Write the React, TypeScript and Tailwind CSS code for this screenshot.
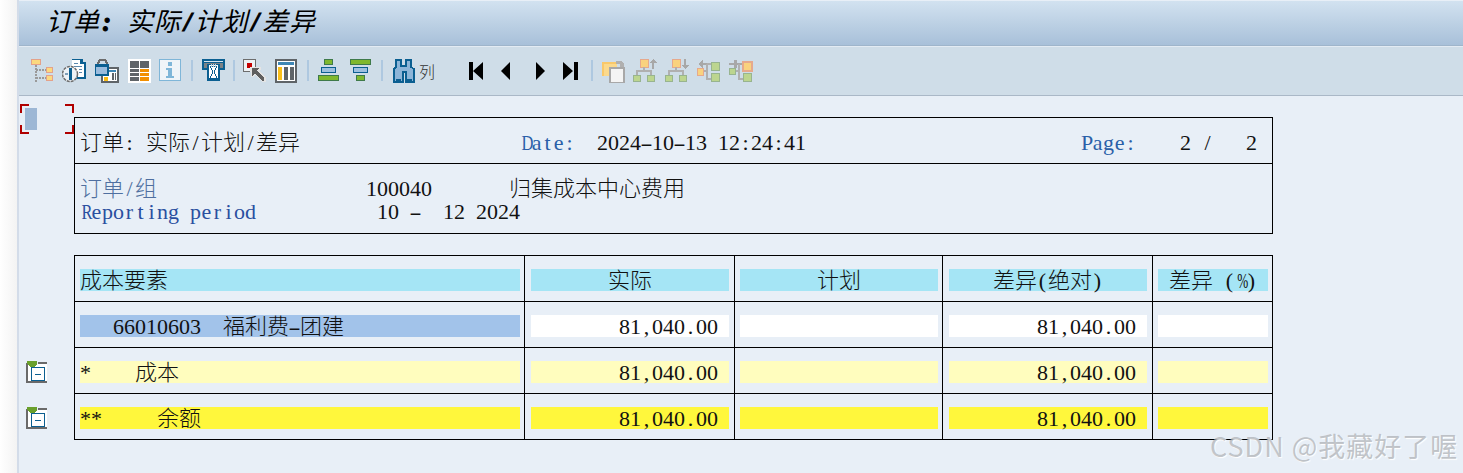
import React from "react";

const BLUE = "#0b5f91";
const GRAY = "#5f6468";

// glyphs that are wider or narrower than the fixed 11px report cell
function fit(ch: string) {
  if (ch === "-") return "scale-x-[1.7]";
  if (ch === "%") return "scale-x-[0.6]";
  if (ch === "R" || ch === "D") return "scale-x-[0.75]";
  return "";
}

// report text: latin cells are 11px wide, CJK cells 22px
function Cells({ text }: { text: string }) {
  return (
    <>
      {text.split(/([\u4e00-\u9fff]+)/).map((part, i) =>
        i % 2 === 1 ? (
          <span key={i} className="font-['Noto_Sans_CJK_SC',sans-serif] text-[22px] font-light leading-[0]">
            {part}
          </span>
        ) : (
          <React.Fragment key={i}>
            {Array.from(part).map((ch, j) => (
              <span key={j} className={`inline-block w-[11px] text-center ${fit(ch)}`}>
                {ch}
              </span>
            ))}
          </React.Fragment>
        ),
      )}
    </>
  );
}

function TitleText({ children }: { children: string }) {
  return <span className="font-['Noto_Sans_CJK_SC',sans-serif] text-[26px] font-normal tracking-[1px]">{children}</span>;
}

function TitleMark({ children }: { children: string }) {
  return <span className="inline-block w-[13.5px] text-center [-webkit-text-stroke:1px_#000]">{children}</span>;
}

function Icon({ children, className = "" }: { children: React.ReactNode; className?: string }) {
  return (
    <svg viewBox="0 0 24 24" shapeRendering="crispEdges" className={`h-6 w-6 shrink-0 ${className}`}>
      {children}
    </svg>
  );
}

function Sep({ className = "" }: { className?: string }) {
  return <div className={`h-[21px] w-[2px] shrink-0 bg-[#aec8e0] ${className}`} />;
}

const TreeIcon = () => (
  <Icon>
    <path d="M6 6v18" stroke="#9a9a9a" strokeWidth="2" strokeDasharray="2 1" />
    <path d="M6 11h10M6 19h10" stroke="#9a9a9a" strokeWidth="2" strokeDasharray="2 1" />
    <rect x="1.5" y="0.5" width="9" height="5" fill="#fbd97f" stroke="#e3a28a" />
    <rect x="16.5" y="8.5" width="6" height="5" fill="#fbd97f" stroke="#e3a28a" />
    <rect x="16.5" y="16.5" width="6" height="5" fill="#fbd97f" stroke="#e3a28a" />
  </Icon>
);

const CopyIcon = () => (
  <Icon>
    <rect x="10" y="0" width="11" height="6" fill={BLUE} />
    <rect x="14" y="3" width="10" height="17" fill={BLUE} />
    <rect x="16" y="5" width="6" height="13" fill="#fff" />
    <rect x="10" y="1" width="8" height="14" fill="#fff" />
    <path d="M12 4h4M12 7h8M17 10h3M17 13h3" stroke="#5b88ad" />
    <circle cx="8" cy="15" r="7.5" fill="#eef2f6" stroke="#6d6d6d" strokeWidth="1.5" strokeDasharray="3 1" shapeRendering="auto" />
    <rect x="7" y="9" width="3" height="12" fill={BLUE} />
    <rect x="3" y="14" width="3" height="2" fill="#7f9fb8" />
  </Icon>
);

const LockIcon = () => (
  <Icon>
    <path d="M3 7V4l2-3h5l2 3v3" fill="none" stroke="#6c6c6c" strokeWidth="2" />
    <rect x="6" y="8" width="18" height="16" fill={GRAY} />
    <rect x="8" y="10" width="14" height="12" fill="#fff" />
    <rect x="14" y="11" width="7" height="2" fill="#3f87b5" />
    <rect x="17" y="14" width="2" height="7" fill={GRAY} />
    <rect x="20" y="14" width="1" height="7" fill={GRAY} />
    <rect x="9" y="18" width="4" height="4" fill="#f9bb16" />
    <rect x="0" y="6" width="13" height="10" fill="#9bbcdd" stroke={BLUE} strokeWidth="1.5" />
    <rect x="0" y="6" width="13" height="2" fill={BLUE} />
  </Icon>
);

const TableIcon = () => (
  <Icon>
    <rect x="1" y="0" width="23" height="24" fill="#fff" />
    <rect x="3" y="2" width="9" height="7" fill={GRAY} />
    <rect x="13" y="2" width="9" height="7" fill={GRAY} />
    <rect x="3" y="10" width="9" height="3" fill={GRAY} />
    <rect x="3" y="14" width="9" height="3" fill={GRAY} />
    <rect x="3" y="18" width="9" height="4" fill={GRAY} />
    <rect x="13" y="10" width="9" height="3" fill="#f28f00" />
    <rect x="13" y="14" width="9" height="3" fill="#f28f00" />
    <rect x="13" y="18" width="9" height="4" fill="#f28f00" />
  </Icon>
);

const InfoIcon = () => (
  <Icon>
    <rect x="0.5" y="0.5" width="21" height="21" fill="#eff4f8" stroke="#7fb6d8" />
    <rect x="9" y="3" width="4" height="4" fill="#7fb6d8" />
    <path d="M7 9h6v8h2v2H7v-2h2v-6H7z" fill="#7fb6d8" />
  </Icon>
);

const PrintIcon = () => (
  <Icon>
    <rect x="0" y="0" width="23" height="11" fill={BLUE} />
    <rect x="2" y="2" width="19" height="1" fill="#d8e4ee" />
    <rect x="2" y="4" width="19" height="5" fill="#7b8287" />
    <rect x="5" y="5" width="13" height="17" fill={BLUE} />
    <rect x="7" y="6" width="9" height="14" fill="#fff" />
    <path d="M8 7h7l-3 6 3 6H8l3-6z" fill="none" stroke={BLUE} />
    <path d="M9 5v3M11 5v3M13 5v3" stroke="#c8d4dc" />
  </Icon>
);

const PickIcon = () => (
  <Icon>
    <rect x="0.5" y="0.5" width="12" height="12" fill="#eef2f5" stroke="#6d6d6d" />
    <rect x="4" y="4" width="5" height="5" fill="#c40000" />
    <path d="M7 8h11v2l-2 2 7 7v4h-4l-7-7-2 2H8z" fill="#e4e4e4" />
    <path d="M9 9h7l-2 3 7 7v3h-2l-7-7-3 2z" fill="#5f5f5f" />
  </Icon>
);

const ColumnsIcon = () => (
  <Icon>
    <rect x="0" y="0" width="22" height="24" fill={GRAY} />
    <rect x="2" y="2" width="18" height="20" fill="#fff" />
    <rect x="3" y="3" width="16" height="3" fill="#3f87b5" />
    <rect x="3" y="8" width="4" height="13" fill="#f9bf1a" />
    <rect x="9" y="8" width="4" height="13" fill={GRAY} />
    <rect x="15" y="8" width="4" height="13" fill={GRAY} />
  </Icon>
);

function Stack({ bars }: { bars: [number, number][] }) {
  return (
    <Icon>
      {bars.map(([x, w], i) => (
        <rect
          key={i}
          x={x + 0.5}
          y={i * 8 + 0.5}
          width={w - 1}
          height="5"
          fill={i === 1 ? "#9dc0e0" : "#7fb82e"}
          stroke={i === 1 ? BLUE : "#3f7a4a"}
        />
      ))}
    </Icon>
  );
}

const Binoculars = () => (
  <Icon>
    <path d="M4 1h5v6h5V1h5v7l3 2v13h-8V13H11v10H2V10l2-2z" fill="#8db5d8" stroke={BLUE} strokeWidth="1.5" />
    <rect x="4" y="20" width="5" height="3" fill={BLUE} />
    <rect x="15" y="20" width="5" height="3" fill={BLUE} />
  </Icon>
);

function Nav({ d }: { d: string }) {
  return (
    <svg viewBox="0 0 24 24" className="h-6 w-6 shrink-0">
      <path d={d} fill="#000" />
    </svg>
  );
}

const MoveIcon = () => (
  <Icon>
    <rect x="0" y="3" width="14" height="14" fill="#f9c86a" />
    <rect x="2" y="5" width="13" height="12" fill="#fbd98c" />
    <path d="M14 2h5l3 3v3h-2l1 2-2 2-3-4h2V5h-4z" fill="#b0b0b0" />
    <rect x="8" y="9" width="14" height="15" fill="#f4f4f4" stroke="#a8a8a8" strokeWidth="2" />
  </Icon>
);

function Org({ arrow }: { arrow: "up" | "down" }) {
  return (
    <Icon>
      <rect x="7" y="0" width="8" height="8" fill="#f9d27f" stroke="#e6a98c" />
      <path d="M11 8v4M4 16v-4h14v4" fill="none" stroke="#b0b0b0" strokeWidth="1.5" />
      <rect x="0.5" y="16.5" width="7" height="6" fill="#bcd58f" stroke="#98b48f" />
      <rect x="14.5" y="16.5" width="7" height="6" fill="#bcd58f" stroke="#98b48f" />
      {arrow === "up" ? (
        <path d="M21 10V4h3l-4-4-4 4h3v6z" fill="#a8a8a8" />
      ) : (
        <path d="M19 0v6h-3l4 4 4-4h-3V0z" fill="#a8a8a8" />
      )}
    </Icon>
  );
}

function OrgSide({ flip }: { flip?: boolean }) {
  return (
    <Icon>
      {flip ? (
        <>
          <path d="M0 4h5V1h3v3h5v2H8v3H5V6H0z" fill="#a8a8a8" />
          <rect x="0.5" y="9.5" width="6" height="6" fill="#bcd58f" stroke="#98b48f" />
          <path d="M7 12h3M10 5v15h4" fill="none" stroke="#b0b0b0" strokeWidth="1.5" />
          <rect x="14" y="3" width="9" height="9" fill="#f9d27f" stroke="#e6a98c" strokeWidth="2" />
          <rect x="14.5" y="14.5" width="8" height="8" fill="#bcd58f" stroke="#98b48f" />
        </>
      ) : (
        <>
          <path d="M1 5l5-4v3h7v2H6v3z" fill="#a8a8a8" />
          <rect x="0.5" y="9.5" width="6" height="7" fill="#f9d27f" stroke="#e6a98c" />
          <path d="M7 12h3M10 5v15h4M10 5h4" fill="none" stroke="#b0b0b0" strokeWidth="1.5" />
          <rect x="14.5" y="3.5" width="8" height="8" fill="#bcd58f" stroke="#98b48f" />
          <rect x="14.5" y="14.5" width="8" height="8" fill="#bcd58f" stroke="#98b48f" />
        </>
      )}
    </Icon>
  );
}

const Collapse = () => (
  <svg viewBox="0 0 22 22" shapeRendering="crispEdges" className="h-[22px] w-[22px] shrink-0">
    <rect x="2" y="3" width="19" height="17" fill="#fff" />
    <rect x="0" y="2" width="2" height="20" fill="#6a6a6a" />
    <rect x="0" y="20" width="21" height="2" fill="#6a6a6a" />
    <rect x="12" y="1" width="9" height="2" fill="#6a6a6a" />
    <rect x="5.5" y="6.5" width="13" height="13" fill="#fff" stroke={BLUE} />
    <rect x="9" y="13" width="6" height="1" fill={BLUE} />
    <path d="M1 0h10v3L8 6H5L1 3z" fill="#6aa02c" />
  </svg>
);

const COLS = [
  "pl-[5px] pr-[4px]",
  "pl-[6px] pr-[5px]",
  "pl-[5px] pr-[4px]",
  "pl-[6px] pr-[5px]",
  "pl-[5px] pr-[4px]",
];

function Row({
  tint,
  firstTint,
  label,
  amount,
  header,
  icon,
}: {
  tint: string;
  firstTint?: string;
  label?: string;
  amount?: boolean;
  header?: string[];
  icon?: boolean;
}) {
  return (
    <div className="flex">
      <div className="flex w-[48px] shrink-0 items-start pt-[13px]">{icon && <Collapse />}</div>
      <div className="grid grid-cols-[450px_210px_208px_210px_120px] border-l border-black">
        {COLS.map((pad, i) => {
          const value = header ? header[i] : i === 0 ? label : amount && (i === 1 || i === 3) ? "81,040.00 " : "";
          const align = i === 0 ? "text-left" : header ? "text-center" : "text-right";
          const bg = i === 0 && firstTint ? firstTint : tint;
          return (
            <div key={i} className={`h-[46px] border-b border-r border-black pt-[13px] ${pad}`}>
              <div className={`h-[22px] whitespace-pre leading-[23px] ${bg} ${align}`}>
                <Cells text={value ?? ""} />
              </div>
            </div>
          );
        })}
      </div>
    </div>
  );
}

export default function App() {
  return (
    <div className="relative flex h-[473px] w-[1463px] overflow-hidden bg-white font-['Liberation_Serif','Noto_Sans_CJK_SC',serif] text-[22px] text-[#111]">
      <div className="w-[17px] shrink-0 bg-gradient-to-r from-[#ffffff] to-[#f3f3f3]" />
      <div className="w-[2px] shrink-0 bg-[#d3dce9]" />

      <main className="flex min-w-0 flex-1 flex-col bg-[#e8eff7]">
        <header className="mt-px flex h-[45px] shrink-0 items-center border-b border-[#9fb5cb] bg-gradient-to-b from-[#d2e2f0] to-[#a8c0d9] pb-[4px] pl-[27px] text-[27px] font-bold italic text-black">
          <h1 className="whitespace-pre leading-none">
            <TitleText>订单</TitleText>
            <TitleMark>:</TitleMark>
            <TitleMark> </TitleMark>
            <TitleText>实际</TitleText>
            <TitleMark>/</TitleMark>
            <TitleText>计划</TitleText>
            <TitleMark>/</TitleMark>
            <TitleText>差异</TitleText>
          </h1>
        </header>

        <nav className="flex h-[50px] shrink-0 items-center gap-2 border-t border-b border-t-[#e3ebf3] border-b-[#aab8c7] bg-[#cfdde8] pb-[1px] pl-[11px]">
          <TreeIcon />
          <CopyIcon />
          <div className="ml-px"><LockIcon /></div>
          <TableIcon />
          <InfoIcon />
          <Sep />
          <div className="ml-px"><PrintIcon /></div>
          <Sep className="-ml-px" />
          <PickIcon />
          <ColumnsIcon />
          <Sep />
          <div className="ml-px"><Stack bars={[[6, 9], [3, 15], [0, 21]]} /></div>
          <Stack bars={[[0, 21], [3, 15], [6, 9]]} />
          <Sep className="-ml-px" />
          <div className="ml-px"><Binoculars /></div>
          <span className="-ml-[5px] w-[16px] font-['Noto_Sans_CJK_SC',sans-serif] text-[16px] font-light text-[#333]">列</span>
          <div className="ml-[22px]"><Nav d="M4 3h4v18H4zM8 12L18 3v18z" /></div>
          <Nav d="M4 12l9-9v18z" />
          <Nav d="M7 3l9 9-9 9z" />
          <Nav d="M2 3l10 9-10 9zM13 3h4v18h-4z" />
          <Sep className="ml-[-2px]" />
          <div className="ml-px"><MoveIcon /></div>
          <div className="-ml-px"><Org arrow="up" /></div>
          <Org arrow="down" />
          <OrgSide />
          <OrgSide flip />
        </nav>

        <section className="pl-[7px]">
          <div className="flex">
            <div className="w-[48px] shrink-0 pt-[8px]">
              <div className="relative -ml-[6px] h-[30px] w-[54px]">
                <span className="absolute left-0 top-0 h-[9px] w-[9px] border-l-2 border-t-2 border-[#b00000]" />
                <span className="absolute right-0 top-0 h-[9px] w-[9px] border-r-2 border-t-2 border-[#b00000]" />
                <span className="absolute bottom-0 left-0 h-[9px] w-[9px] border-b-2 border-l-2 border-[#b00000]" />
                <span className="absolute bottom-0 right-0 h-[9px] w-[9px] border-b-2 border-r-2 border-[#b00000]" />
                <span className="absolute left-[5px] top-[4px] h-[22px] w-[12px] bg-[#9db7d5]" />
              </div>
            </div>
            <div className="mt-[21px] h-[117px] w-[1199px] border border-black">
              <div className="h-[46px] whitespace-pre border-b border-black pl-[5px] pt-[13px] leading-[23px]">
                <Cells text="订单: 实际/计划/差异                    " />
                <span className="text-[#2a5fa8]"><Cells text="Date:" /></span>
                <Cells text="  2024-10-13 12:24:41                         " />
                <span className="text-[#2a5fa8]"><Cells text="Page:" /></span>
                <Cells text="    2 /   2" />
              </div>
              <div className="whitespace-pre pl-[5px] pt-[13px] leading-[23px]">
                <div className="h-[23px]">
                  <span className="text-[#4f6fa0]"><Cells text="订单/组" /></span>
                  <Cells text="                   100040       归集成本中心费用" />
                </div>
                <div className="h-[23px]">
                  <span className="text-[#2a4fa0]"><Cells text="Reporting period" /></span>
                  <Cells text="           10 -  12 2024" />
                </div>
              </div>
            </div>
          </div>

          <div className="ml-[48px] mt-[21px] h-px w-[1199px] bg-black" />
          <Row tint="bg-[#a5e5f5]" header={["成本要素", "实际", "计划", "差异(绝对)", "差异 (%)"]} />
          <Row tint="bg-white" firstTint="bg-[#a2c3ea]" label="   66010603  福利费-团建" amount />
          <Row tint="bg-[#fffdbe]" label="*    成本" amount icon />
          <Row tint="bg-[#fff73c]" label="**     余额" amount icon />
        </section>
      </main>

      <div className="absolute left-[1210px] top-[429px] whitespace-pre font-['Noto_Sans_CJK_SC',sans-serif] text-[27px] leading-[34px] tracking-[1px] text-[#a9adb2]/70 [text-shadow:1px_1px_1px_#ffffff]">
        CSDN @我藏好了喔
      </div>
    </div>
  );
}
